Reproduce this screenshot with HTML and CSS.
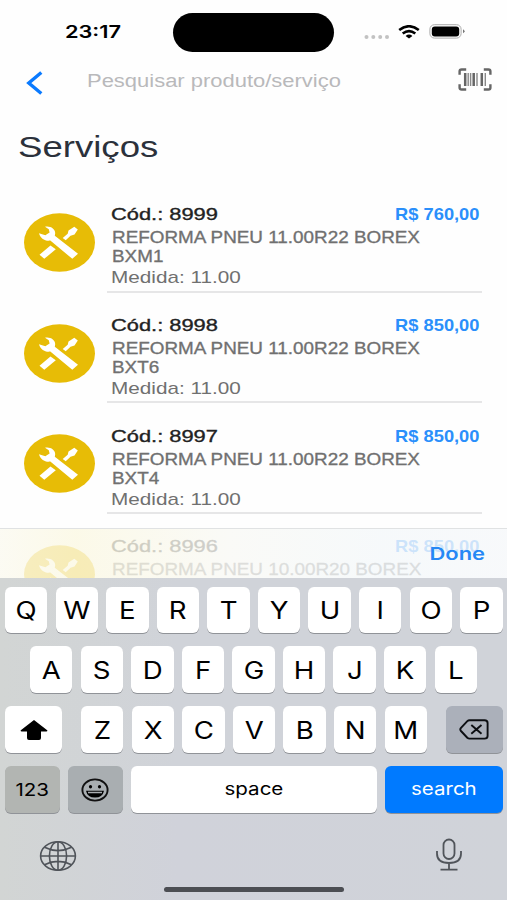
FILE: index.html
```html
<!DOCTYPE html>
<html lang="pt-BR">
<head>
<meta charset="utf-8">
<title>Serviços</title>
<link rel="stylesheet" href="styles.css">
</head>
<body>
<svg class="defs" width="0" height="0">
  <symbol id="tools" viewBox="0 0 71 59" preserveAspectRatio="none">
    <ellipse cx="35.5" cy="29.5" rx="35.5" ry="29.3" fill="#e7bc06"/>
    <path d="M15.5 41.8 L26.5 32.5 L31.8 36.3 L20.3 45.8Z" fill="#fff"/>
    <path d="M38.7 25 L43.7 20.8 L44.5 17.5 L50.3 13.7 L53.8 16.5 L50.5 21.5 L46.5 22.7 L41.7 27.3Z" fill="#fff"/>
    <path d="M15 20.2 L21.3 22.2 L25.6 19.4 L24.8 16.2 L21 13.8 C26.5 12.8 31.2 16 31.2 20.2 L30.8 22.8 L54 40.8 L48.3 45.8 L26.3 27.6 C21.3 28.5 16 25.2 15 20.2Z" fill="#fff"/>
  </symbol>
</svg>
<main class="phone">
  <header class="status">
    <span class="clock"><span class="fit">23:17</span></span>
    <span class="island"></span>
    <span class="signals">
      <svg class="dots" width="26" height="6" viewBox="0 0 26 6"><g fill="#c2c2c2"><circle cx="2.5" cy="3" r="2"/><circle cx="9.3" cy="3" r="2"/><circle cx="16.2" cy="3" r="2"/><circle cx="23" cy="3" r="2"/></g></svg>
      <svg class="wifi" width="22" height="14" viewBox="0 0 22 14"><g fill="none" stroke="#000" stroke-width="2.6"><path d="M1.2 5.1 Q11 -2.6 20.8 5.1"/><path d="M4.7 8.5 Q11 3.7 17.3 8.5"/></g><path d="M7.6 10.9 Q11 8.3 14.4 10.9 L11 13.6Z"/></svg>
      <svg class="battery" width="36" height="15" viewBox="0 0 36 15"><rect x=".9" y=".7" width="31.2" height="13.4" rx="4.5" fill="none" stroke="#aaa"/><rect x="2.8" y="2.4" width="27.4" height="10" rx="3" fill="#000"/><path d="M34 5.3v4q1.6-.8 1.6-2t-1.6-2z" fill="#777"/></svg>
    </span>
  </header>
  <div class="searchbar">
    <svg class="back" width="18" height="24" viewBox="0 0 18 24"><path d="M16.3 1.5 L3.8 12 L16.3 22.5" fill="none" stroke="#0a7aff" stroke-width="3.4"/></svg>
    <span class="placeholder"><span class="fit">Pesquisar produto/serviço</span></span>
    <svg class="scan" width="34" height="23" viewBox="0 0 34 23"><path d="M1.6 6.7V3.2Q1.6 1.5 3.6 1.5H8.2M25.8 1.5h4.6q2 0 2 1.7v3.5M32.4 16.3v3.5q0 1.7-2 1.7h-4.6M8.2 21.5H3.6q-2 0-2-1.7v-3.5" fill="none" stroke="#666" stroke-width="2.4"/><path d="M7.2 5v13M15.7 5v13M23.8 5v13" stroke="#666" stroke-width="2.5"/><path d="M10.2 5v13M12.6 5v13M19 5v13M27.3 5v13" stroke="#888" stroke-width="1.4"/></svg>
  </div>
  <h1 class="title"><span class="fit">Serviços</span></h1>
  <section class="list">
    <article class="item">
      <svg class="badge" width="71" height="59"><use href="#tools" width="71" height="59"/></svg>
      <div class="info">
        <div class="top"><span class="code"><span class="fit">Cód.: 8999</span></span><span class="price"><span class="fit">R$ 760,00</span></span></div>
        <div class="name"><span class="fit">REFORMA PNEU 11.00R22 BOREX<br>BXM1</span></div>
        <div class="size"><span class="fit">Medida: 11.00</span></div>
      </div>
    </article>
    <article class="item">
      <svg class="badge" width="71" height="59"><use href="#tools" width="71" height="59"/></svg>
      <div class="info">
        <div class="top"><span class="code"><span class="fit">Cód.: 8998</span></span><span class="price"><span class="fit">R$ 850,00</span></span></div>
        <div class="name"><span class="fit">REFORMA PNEU 11.00R22 BOREX<br>BXT6</span></div>
        <div class="size"><span class="fit">Medida: 11.00</span></div>
      </div>
    </article>
    <article class="item">
      <svg class="badge" width="71" height="59"><use href="#tools" width="71" height="59"/></svg>
      <div class="info">
        <div class="top"><span class="code"><span class="fit">Cód.: 8997</span></span><span class="price"><span class="fit">R$ 850,00</span></span></div>
        <div class="name"><span class="fit">REFORMA PNEU 11.00R22 BOREX<br>BXT4</span></div>
        <div class="size"><span class="fit">Medida: 11.00</span></div>
      </div>
    </article>
    <article class="item">
      <svg class="badge" width="71" height="59"><use href="#tools" width="71" height="59"/></svg>
      <div class="info">
        <div class="top"><span class="code"><span class="fit">Cód.: 8996</span></span><span class="price"><span class="fit">R$ 850,00</span></span></div>
        <div class="name"><span class="fit">REFORMA PNEU 10.00R20 BOREX</span></div>
      </div>
    </article>
  </section>
  <section class="keyboard">
    <div class="accessory"><span class="done"><span class="fit">Done</span></span></div>
    <div class="keys">
      <div class="row">
        <span class="key"><span class="fit">Q</span></span><span class="key"><span class="fit">W</span></span><span class="key"><span class="fit">E</span></span><span class="key"><span class="fit">R</span></span><span class="key"><span class="fit">T</span></span><span class="key"><span class="fit">Y</span></span><span class="key"><span class="fit">U</span></span><span class="key"><span class="fit">I</span></span><span class="key"><span class="fit">O</span></span><span class="key"><span class="fit">P</span></span>
      </div>
      <div class="row middle">
        <span class="key"><span class="fit">A</span></span><span class="key"><span class="fit">S</span></span><span class="key"><span class="fit">D</span></span><span class="key"><span class="fit">F</span></span><span class="key"><span class="fit">G</span></span><span class="key"><span class="fit">H</span></span><span class="key"><span class="fit">J</span></span><span class="key"><span class="fit">K</span></span><span class="key"><span class="fit">L</span></span>
      </div>
      <div class="row spread">
        <span class="key wide"><svg width="30" height="22" viewBox="0 0 30 22"><path d="M15 1 L28.2 11.3 Q29 12.4 27.5 12.5 H22 V19 Q22 21 20 21 H10 Q8 21 8 19 V12.5 H2.5 Q1 12.4 1.8 11.3Z"/></svg></span>
        <div class="row">
          <span class="key"><span class="fit">Z</span></span><span class="key"><span class="fit">X</span></span><span class="key"><span class="fit">C</span></span><span class="key"><span class="fit">V</span></span><span class="key"><span class="fit">B</span></span><span class="key"><span class="fit">N</span></span><span class="key"><span class="fit">M</span></span>
        </div>
        <span class="key wide delete"><svg width="30" height="21" viewBox="0 0 30 21"><path d="M10.5 1.2H25.5Q28.6 1.2 28.6 4V17Q28.6 19.6 25.5 19.6H10.5Q9.3 19.6 8.3 18.7L2 12Q.6 10.4 2 8.8L8.3 2.1Q9.3 1.2 10.5 1.2ZM12.3 6l10.2 8.8M22.5 6L12.3 14.8" fill="none" stroke="#0c0e12" stroke-width="1.9"/></svg></span>
      </div>
      <div class="row bottom">
        <span class="key numbers"><span class="fit">123</span></span>
        <span class="key emoji"><svg width="28" height="24" viewBox="0 0 28 24"><ellipse cx="14" cy="12" rx="12.6" ry="10.6" fill="none" stroke="#111" stroke-width="1.9"/><ellipse cx="9.5" cy="8.7" rx="1.6" ry="1.7"/><ellipse cx="18.5" cy="8.7" rx="1.6" ry="1.7"/><path d="M5 12.7H23Q21.7 19.5 14 19.5T5 12.7Z"/><path d="M7 14.5H21" stroke="#a9adb0" stroke-width="1.5"/></svg></span>
        <span class="key space"><span class="fit">space</span></span>
        <span class="key search"><span class="fit">search</span></span>
      </div>
    </div>
    <div class="tray">
      <svg class="globe" width="38" height="32" viewBox="0 0 38 32"><g fill="none" stroke="#50545a" stroke-width="1.6"><ellipse cx="19" cy="16" rx="17.4" ry="14.2"/><ellipse cx="19" cy="16" rx="8.6" ry="14.2"/><path d="M19 1.8v28.4M1.6 16h34.8M5.5 7.3Q19 14 32.5 7.3M5.5 24.7Q19 18 32.5 24.7"/></g></svg>
      <svg width="28" height="34" viewBox="0 0 28 34"><g fill="none" stroke="#50545a" stroke-width="1.8"><rect x="8.5" y="1.5" width="11" height="19.5" rx="5.5"/><path d="M2 13V15.8Q2 25 14 25T26 15.8V13M14 25v6.5M5.5 31.7h17"/></g></svg>
    </div>
    <div class="home"></div>
  </section>
</main>
</body>
</html>
```
FILE: styles.css
```css
* { box-sizing: border-box; }
body { margin: 0; background: #fefefe; font-family: "Liberation Sans", Arial, sans-serif; }
.defs { display: block; }
.phone { position: relative; width: 507px; height: 900px; overflow: hidden; background: #fefefe; display: flex; flex-direction: column; }

/* Wide letterforms: each label stretches sideways by its own factor */
.fit { display: inline-block; white-space: nowrap; transform: scaleX(var(--wide, 1.2)); transform-origin: var(--from, left) center; }

.status { height: 58px; flex: none; display: grid; grid-template-columns: 173px 161px 1fr; padding-top: 12.5px; }
.clock { --wide: 1.25; padding-left: 65px; font: 600 17.4px/38px Inter, sans-serif; }
.island { height: 39px; border-radius: 20px; background: #000; }
.signals { display: flex; height: 39px; padding-left: 29.5px; }
.dots { margin-top: 21px; }
.wifi { margin: 12px 0 0 8.5px; }
.battery { margin: 11.5px 0 0 9px; }

.searchbar { height: 46px; flex: none; display: flex; align-items: flex-start; padding: 0 15.5px 0 25px; }
.back { margin-top: 12.5px; }
.placeholder { --wide: 1.22; flex: 1; padding-left: 44.3px; font-size: 18px; line-height: 46px; color: #b9b9bb; }
.scan { margin-top: 10px; }

.title { --wide: 1.24; margin: 0; height: 78px; flex: none; padding: 24px 0 0 18px; font-weight: 400; font-size: 29.5px; line-height: 38px; color: #2b313b; }

.list { flex: none; }
.item { height: 110.7px; display: flex; padding: 0 25px 0 24px; }
.badge { flex: none; margin-top: 31px; }
.info { flex: 1; margin-left: 12px; padding: 21.3px 0 0 3px; border-bottom: 2px solid #e6e6e7; }
.top { display: flex; justify-content: space-between; line-height: 24px; font-size: 17px; }
.code { --wide: 1.285; padding-left: .5px; color: #222; -webkit-text-stroke: .35px #222; }
.price { --wide: 1.075; --from: right; padding-right: 2.7px; color: #2a8ffb; font-weight: 700; }
.name { --wide: 1.21; padding: 1px 0 0 2px; font-size: 15.6px; line-height: 19px; color: #707070; -webkit-text-stroke: .3px #707070; }
.size { --wide: 1.28; padding-left: 1.3px; font-size: 16.2px; line-height: 23px; color: #707070; }

.keyboard { position: absolute; left: 0; right: 0; bottom: 0; height: 372px; }
.accessory { height: 50px; border-top: 1px solid #e0e2e3; background: linear-gradient(90deg, #fbfaf0cc 0, #fbf8e3cc 15%, #f9f9f5cc 45%, #f4f8facc 75%, #f6f8facc 100%); text-align: right; padding-right: 22px; }
.done { --wide: 1.26; --from: right; font: 600 17.4px/49px Inter, sans-serif; color: #2688f5; }
.keys { height: 236px; padding: 8.5px 4px 0 5px; display: flex; flex-direction: column; gap: 13.6px; background: linear-gradient(90deg, #d2d5d4, #d0d3d9 35%, #d0d3d9); }
.row { display: flex; gap: 8.2px; }
.middle { padding-left: 25px; }
.spread { justify-content: space-between; }
.key { width: 42.4px; height: 46.4px; flex: none; display: flex; align-items: center; justify-content: center; border-radius: 6px; background: #fff; box-shadow: 0 1px 0 #909398; font: 400 24px/46px Inter, sans-serif; color: #000; --wide: 1.15; --from: center; padding-top: 2px; }
.wide { width: 57px; }
.wide, .emoji { padding-top: 0; }
.delete { background: #abb0ba; }
.numbers, .emoji, .space, .search { font-size: 17.4px; --wide: 1.18; }
.numbers { width: 54.5px; padding-top: 0; background: #b2b5b2; }
.emoji { width: 55px; background: #a9aeb1; }
.space { width: 245.8px; padding: 0 0 2px; }
.search { width: 118px; padding: 0 0 2px 1px; background: #007aff; color: #fff; }
.tray { height: 86px; display: flex; justify-content: space-between; align-items: flex-start; padding: 24px 44px 0 39px; background: linear-gradient(90deg, #d2d5d4, #d0d2da 35%, #d0d3d9); }
.globe { margin-top: 1.5px; }
.home { position: absolute; left: 164px; bottom: 8.5px; width: 180px; height: 5px; border-radius: 3px; background: #4c4e53; }
```
